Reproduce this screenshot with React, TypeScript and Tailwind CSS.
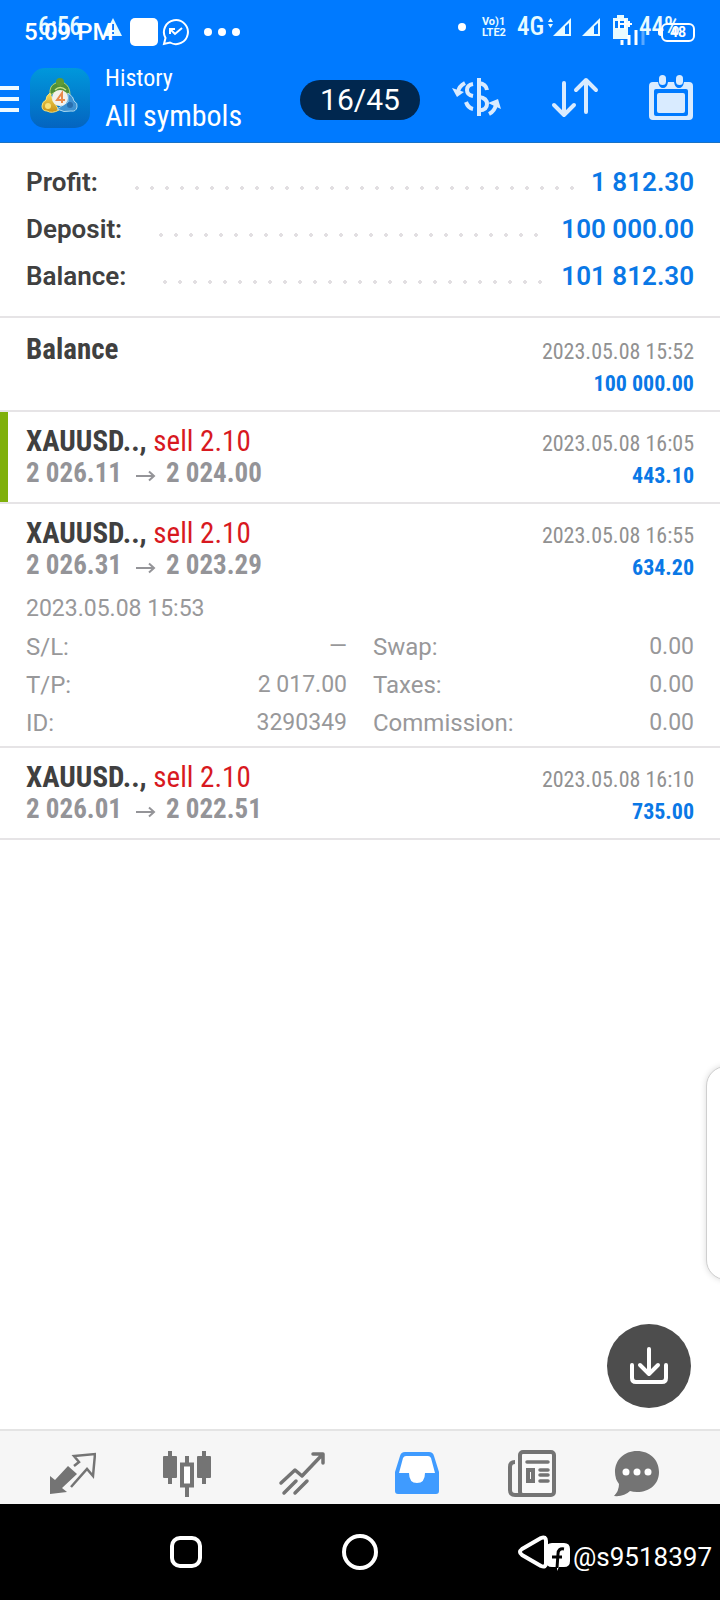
import React from "react";

const SUMMARY = [
  { label: "Profit:", value: "1 812.30" },
  { label: "Deposit:", value: "100 000.00" },
  { label: "Balance:", value: "101 812.30" },
];

type Deal = {
  symbol: string;
  side?: string;
  from?: string;
  to?: string;
  time: string;
  profit: string;
  marked?: boolean;
  opened?: string;
  details?: [string, string][];
};

const DEALS: Deal[] = [
  { symbol: "Balance", time: "2023.05.08 15:52", profit: "100 000.00" },
  {
    symbol: "XAUUSD..,",
    side: "sell 2.10",
    from: "2 026.11",
    to: "2 024.00",
    time: "2023.05.08 16:05",
    profit: "443.10",
    marked: true,
  },
  {
    symbol: "XAUUSD..,",
    side: "sell 2.10",
    from: "2 026.31",
    to: "2 023.29",
    time: "2023.05.08 16:55",
    profit: "634.20",
    opened: "2023.05.08 15:53",
    details: [
      ["S/L:", "—"],
      ["Swap:", "0.00"],
      ["T/P:", "2 017.00"],
      ["Taxes:", "0.00"],
      ["ID:", "3290349"],
      ["Commission:", "0.00"],
    ],
  },
  {
    symbol: "XAUUSD..,",
    side: "sell 2.10",
    from: "2 026.01",
    to: "2 022.51",
    time: "2023.05.08 16:10",
    profit: "735.00",
  },
];

export default function App() {
  return (
    <div className="relative flex min-h-screen w-full flex-col overflow-hidden bg-white font-['Roboto',sans-serif] text-[#404040]">
      <header className="relative border-b border-[#1a72c4] bg-[#007aff] text-white">
        <StatusBar />
        <AppBar />
      </header>

      <main className="relative flex-1">
        <Summary />
        <ul className="pt-0.5">
          {DEALS.map((deal) => (
            <DealRow key={deal.time} deal={deal} />
          ))}
        </ul>

        {/* Edge panel handle */}
        <div className="absolute right-0 bottom-[149px] h-[214px] w-[14px] overflow-visible">
          <div className="h-full w-10 rounded-[28px] border border-[#cfcfcf] bg-white shadow-[0_0_6px_rgba(0,0,0,0.15)]" />
        </div>

        <button
          aria-label="Download"
          className="absolute right-[29px] bottom-[21px] flex size-[84px] items-center justify-center rounded-full bg-[#4d4d4d]"
        >
          <svg viewBox="0 0 40 40" className="size-10" fill="none" stroke="#fff" strokeWidth="4" strokeLinecap="round" strokeLinejoin="round">
            <path d="M20 3v24M11 19l9 9 9-9" />
            <path d="M3 19v13q0 4 4 4h26q4 0 4-4V19" />
          </svg>
        </button>
      </main>

      <TabBar />
      <SystemBar />
    </div>
  );
}

function Signal({ className }: { className: string }) {
  return (
    <svg viewBox="0 0 18 18" className={className} fill="currentColor">
      <path d="M18 0v18H0z" />
      <path d="M16 5v11h-4V8.500z" fill="#007aff" />
    </svg>
  );
}

function StatusBar() {
  return (
    <div className="relative h-[54px]">
      {/* Lower layer */}
      <div className="flex h-full items-center pr-10 pl-[38px] text-[#e8fbff]">
        <span className="w-[42px] font-['Roboto_Condensed',Roboto,sans-serif] text-[25px] leading-6 font-medium">6:56</span>
        <svg viewBox="0 0 18 18" className="ml-6 h-[18px] w-[18px]">
          <path d="M9 0 18 18H0z" fill="currentColor" />
          <path d="M9 6v6M9 14v2" stroke="#007aff" strokeWidth="2" />
        </svg>
        <span className="ml-auto size-2 rounded-full bg-white" />
        <span className="ml-4 flex w-[27px] flex-col text-[11px] leading-[11px] font-bold">
          <span>Vo)1</span>
          <span>LTE2</span>
        </span>
        <span className="ml-2 font-['Roboto_Condensed',Roboto,sans-serif] text-[25px] leading-6 font-medium">4G</span>
        <svg viewBox="0 0 5 10" className="ml-1 h-2.5 w-[5px] -translate-y-1" fill="currentColor">
          <path d="M0 4l2.500-4L5 4zM0 6l2.500 4L5 6z" />
        </svg>
        <Signal className="size-[18px]" />
        <Signal className="ml-[11px] size-[18px]" />
        <svg viewBox="0 0 15 24" className="ml-[13px] h-6 w-[15px]" fill="currentColor">
          <path d="M4 0h7v3h4v21H0V3h4z" />
          <path d="M2 6h11v7H2z" fill="#007aff" />
        </svg>
        <span className="ml-[11px] font-['Roboto_Condensed',Roboto,sans-serif] text-[25px] leading-6 font-medium">44%</span>
      </div>

      {/* Upper layer */}
      <div className="absolute inset-x-0 top-0 flex h-16 items-center pr-[25px] pl-6 text-white">
        <span className="text-[24px] leading-6 font-medium">5:09 PM</span>
        <span className="ml-4 size-7 rounded-[5px] bg-white" />
        <svg viewBox="0 0 28 28" className="ml-1 size-7" fill="none" stroke="#fff" strokeWidth="2">
          <path d="M3.500 20A12 12 0 1 1 8 24.500L2 26z" />
          <path d="M8 16v-5h5M8 11l5 5 7-6" />
        </svg>
        <span className="ml-[14px] flex gap-1.5">
          <i className="size-2 rounded-full bg-white" />
          <i className="size-2 rounded-full bg-white" />
          <i className="size-2 rounded-full bg-white" />
        </span>
        <svg viewBox="0 0 30 28" className="ml-auto h-7 w-[30px]" fill="none" stroke="#fff" strokeWidth="2">
          <path d="M3 1v10M9 1v10M3 6h6M10 6h6M13 3v6" />
          <path d="M6 22v5M13 17v10M20 12v15" strokeWidth="3" />
          <path d="M27 13v14" strokeWidth="3" strokeOpacity=".35" />
        </svg>
        <span className="ml-3 h-2 w-[3px] rounded-l bg-white" />
        <span className="flex h-[19px] w-[34px] items-center justify-center rounded-[6px] border-2 border-white text-[14px] leading-[14px] font-bold">
          48
        </span>
      </div>
    </div>
  );
}

function AppBar() {
  return (
    <div className="relative flex h-[88px] items-center pr-[27px] text-[#d9ebff]">
      <button aria-label="Menu" className="flex w-[19px] flex-col gap-[7px] pt-0.5">
        <i className="h-1 bg-[#effaff]" />
        <i className="h-1 bg-[#effaff]" />
        <i className="h-1 bg-[#effaff]" />
      </button>
      <AppLogo />
      <div className="ml-[15px] font-['Roboto_Condensed',Roboto,sans-serif] text-white">
        <p className="text-[24px] leading-9">History</p>
        <h1 className="text-[30px] leading-10">All symbols</h1>
      </div>

      <span className="absolute left-1/2 mt-1 flex h-10 w-[120px] -translate-x-1/2 items-center justify-center rounded-full bg-[#00274f] text-[30px] leading-10 text-white">
        16/45
      </span>

      <div className="ml-auto flex items-center gap-[50px]">
        <button aria-label="Currency">
          <svg viewBox="0 0 50 44" className="h-11 w-[50px]" fill="none" stroke="currentColor" strokeWidth="4">
            <path d="M28 2v38" />
            <path d="M22 8q-6 1-6 6t6 6" />
            <path d="M15 26q2 6 7 7" />
            <path d="M28 7q7 1 8 7M28 21q8 1 8 7t-8 6.500" />
            <path d="M14 7Q8 10 7 16" />
            <path d="M1 12l5 9 7-5z" fill="currentColor" stroke="none" />
            <path d="M38 38q6-3 7-10" />
            <path d="M37 27l10-4 3 10z" fill="currentColor" stroke="none" />
          </svg>
        </button>
        <button aria-label="Sort">
          <svg viewBox="0 0 48 44" className="h-11 w-12" fill="none" stroke="currentColor" strokeWidth="4" strokeLinecap="round" strokeLinejoin="round">
            <path d="M13 7v32M3 29l10 10 10-10" />
            <path d="M35 36V4M25 14 35 4l10 10" />
          </svg>
        </button>
        <button aria-label="Calendar">
          <svg viewBox="0 0 44 48" className="h-12 w-11" fill="none">
            <path d="M4 8h5q1 6 5 6t5-6h6q1 6 5 6t5-6h5q4 0 4 4v30q0 4-4 4H4q-4 0-4-4V12q0-4 4-4z" fill="currentColor" />
            <rect x="5" y="15" width="34" height="27" rx="2" fill="#007aff" />
            <rect x="8" y="19" width="28" height="20" rx="2" fill="currentColor" />
            <rect x="10" y="1" width="7" height="10" rx="3.500" fill="currentColor" />
            <rect x="27" y="1" width="7" height="10" rx="3.500" fill="currentColor" />
          </svg>
        </button>
      </div>
    </div>
  );
}

function AppLogo() {
  return (
    <svg viewBox="0 0 60 60" className="ml-[11px] size-[60px] shrink-0">
      <defs>
        <linearGradient id="tile" x1="0" y1="0" x2="0" y2="1">
          <stop offset="0" stopColor="#0098dc" />
          <stop offset="1" stopColor="#0464c0" />
        </linearGradient>
        <linearGradient id="gold" x1="0" y1="0" x2="0" y2="1">
          <stop offset="0" stopColor="#f4dc5c" />
          <stop offset="1" stopColor="#c98f14" />
        </linearGradient>
      </defs>
      <rect width="60" height="60" rx="15" fill="url(#tile)" />
      <path d="M20 27q-1-10 6-12 4-7 8 0 6 3 6 12l-7-3h-7z" fill="#4f8f38" stroke="#b6d56a" />
      <circle cx="30" cy="14" r="4" fill="#5f9b35" />
      <path d="M25 22q5-5 11 0" fill="none" stroke="#c9e28a" strokeWidth="1.500" />
      <path d="M20 25q-4 3-4 7-4 2-4 6 0 5 5 5 5 3 12-1l-6-9z" fill="url(#gold)" stroke="#f6e27a" />
      <circle cx="18" cy="38" r="3" fill="#f8e27a" />
      <path d="M38 25q6 4 6 8 4 2 3 6-1 5-6 4-7 2-14-2l11-7z" fill="#3f92d2" stroke="#a8d8f0" />
      <circle cx="40" cy="37" r="3" fill="#2a6fae" />
      <circle cx="30" cy="30" r="8" fill="#f3f1ec" />
      <path d="M32 35v-10l-5 7h8" fill="none" stroke="#e88a4c" strokeWidth="2" />
    </svg>
  );
}

function Summary() {
  return (
    <dl className="border-b-2 border-[#e6e4e6] px-[26px] py-4 text-[26px] font-semibold">
      {SUMMARY.map((row) => (
        <div key={row.label} className="flex h-[47px] items-center">
          <dt>{row.label}</dt>
          <dd className="flex flex-1 items-center text-[#0a78e6]">
            <span className="mt-2.5 mr-4 ml-[37px] h-1 flex-1 bg-[radial-gradient(circle_at_2px_2px,#e2dfe2_2px,transparent_2px)] bg-[length:15px_4px] bg-repeat-x" />
            {row.value}
          </dd>
        </div>
      ))}
    </dl>
  );
}

function DealRow({ deal }: { deal: Deal }) {
  return (
    <li className="relative border-b-2 border-[#e6e4e6] px-[26px]">
      {deal.marked && <span className="absolute inset-y-0 left-0 w-2 bg-[#7fb00b]" />}
      <div className="flex h-[90px] justify-between font-['Roboto_Condensed',Roboto,sans-serif]">
        <div className="pt-[13px] text-[29px] leading-8">
          <p>
            <b>{deal.symbol}</b> {deal.side && <span className="text-[#d8191f]">{deal.side}</span>}
          </p>
          {deal.from && (
            <p className="flex items-center text-[27px] font-bold text-[#949498]">
              {deal.from}
              <svg viewBox="0 0 20 12" className="mt-1.5 mr-2.5 ml-[14px] h-3 w-5" fill="none" stroke="currentColor" strokeWidth="2">
                <path d="M0 6h18M13 1.500 18 6l-5 4.500" />
              </svg>
              {deal.to}
            </p>
          )}
        </div>
        <div className="pt-4 text-right text-[22px] leading-8">
          <p className="text-[#919191]">{deal.time}</p>
          <p className="font-bold text-[#0a78e6]">{deal.profit}</p>
        </div>
      </div>

      {deal.details && (
        <div className="-mt-1 pb-1 text-[23px] leading-[38px] text-[#98989a]">
          <p>{deal.opened}</p>
          <dl className="grid grid-cols-2 gap-x-[26px]">
            {deal.details.map(([label, value]) => (
              <div key={label} className="flex justify-between">
                <dt className="text-[24px]">{label}</dt>
                <dd>{value}</dd>
              </div>
            ))}
          </dl>
        </div>
      )}
    </li>
  );
}

function TabBar() {
  return (
    <nav className="grid h-[75px] grid-cols-[repeat(5,5fr)_4fr] items-center justify-items-center border-t-2 border-[#e4e4e4] bg-[#f6f6f6] pt-3 pr-[38px] pl-[14px] text-[#747474]">
      <button aria-label="Quotes">
        <svg viewBox="0 0 48 48" className="size-12">
          <path d="M2 26l5 4 13-14 9 8-15 14 5 4-17 2z" fill="currentColor" />
          <path d="M26 16l5-4-5-6 21-2-2 22-6-7-16 18" fill="none" stroke="currentColor" strokeWidth="2.500" />
        </svg>
      </button>
      <button aria-label="Charts">
        <svg viewBox="0 0 48 48" className="size-12" fill="currentColor">
          <rect x="0" y="6" width="14" height="22" rx="1" />
          <path d="M5 1h4v33H5zM39 1h4v33h-4zM22 6h4v9h-4zM22 36h4v11h-4z" />
          <rect x="34" y="6" width="14" height="22" rx="1" />
          <rect x="19" y="14.500" width="10" height="21" fill="#fff" stroke="currentColor" strokeWidth="4" />
        </svg>
      </button>
      <button aria-label="Trade">
        <svg viewBox="0 0 48 48" className="size-12" fill="none" stroke="currentColor" strokeWidth="3.500" strokeLinecap="round" strokeLinejoin="round">
          <path d="M3 33l14-13 7 6L44 5M35 4h10v9" />
          <path d="M6 43l12-12M17 43l12-12" />
        </svg>
      </button>
      <button aria-label="History" className="text-[#3f9bff]">
        <svg viewBox="0 0 48 48" className="size-12">
          <path d="M12 2h24q4 0 5 4l5 16v19q0 3-3 3H5q-3 0-3-3V22L7 6q1-4 5-4z" fill="currentColor" />
          <path d="M13 6h22q2 0 3 2l4 15H32q0 10-8 10t-8-10H6l4-15q1-2 3-2z" fill="#fff" />
        </svg>
      </button>
      <button aria-label="News">
        <svg viewBox="0 0 48 48" className="size-12" fill="none" stroke="currentColor" strokeWidth="4">
          <rect x="12" y="2" width="34" height="43" rx="3" fill="#fafafa" />
          <path d="M7 12q-5 0-5 5v23q0 5 5 5h8" />
          <path d="M19 12h21M32 20h8M32 25h8M32 31h8" strokeWidth="3.500" strokeLinecap="round" />
          <rect x="20" y="20" width="5" height="11" />
        </svg>
      </button>
      <button aria-label="Messages">
        <svg viewBox="0 0 48 48" className="size-12">
          <path d="M25 1c13 0 22 9 22 21s-9 20-22 20q-4 0-7-1-6 6-16 5 5-5 5-12-4-5-4-12C3 10 12 1 25 1z" fill="currentColor" />
          <circle cx="14" cy="22" r="3.500" fill="#fff" />
          <circle cx="25" cy="22" r="3.500" fill="#fff" />
          <circle cx="36" cy="22" r="3.500" fill="#fff" />
        </svg>
      </button>
    </nav>
  );
}

function SystemBar() {
  return (
    <footer className="relative flex h-24 items-center justify-center gap-[138px] bg-black text-white">
      <button aria-label="Recent apps" className="flex size-9 items-center justify-center">
        <span className="size-8 rounded-[10px] border-4 border-white" />
      </button>
      <button aria-label="Home" className="size-9 rounded-full border-4 border-white" />
      <button aria-label="Back" className="size-9">
        <svg viewBox="0 0 36 36" className="size-9" fill="none" stroke="#fff" strokeWidth="4" strokeLinejoin="round">
          <path d="M6 15 25 4q5-2 5 3v22q0 5-5 3L6 21q-4-3 0-6z" />
        </svg>
      </button>

      <p className="absolute right-2 bottom-[27px] flex items-center gap-[3px] text-[26px] leading-8">
        <svg viewBox="0 0 24 28" className="h-7 w-6">
          <path d="M6 0h12q6 0 6 6v12q0 6-6 6h-5l-2 4v-4H6q-6 0-6-6V6q0-6 6-6z" fill="#fff" />
          <path d="M18 6q-6-1-6 5l-1 14M6 14h10" fill="none" stroke="#000" strokeWidth="3" />
        </svg>
        @s9518397
      </p>
    </footer>
  );
}
